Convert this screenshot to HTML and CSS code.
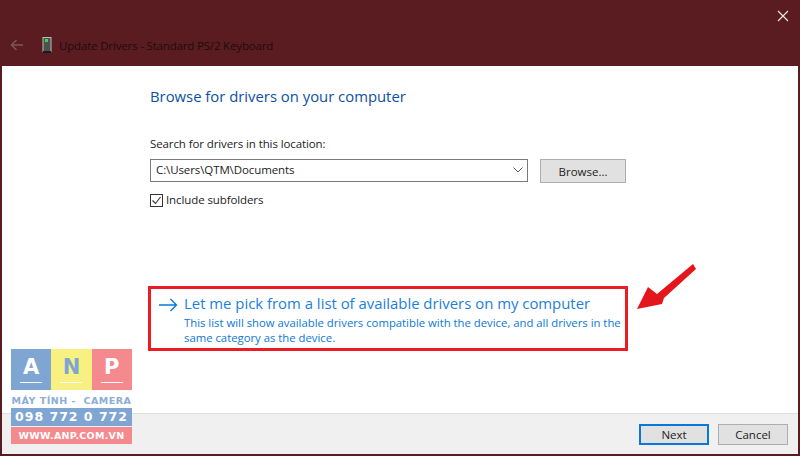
FILE: index.html
```html
<!DOCTYPE html>
<html lang="en">
<head>
<meta charset="utf-8">
<title>Update Drivers</title>
<link rel="stylesheet" href="styles.css">
</head>
<body>
<div class="window">
  <header class="titlebar">
    <div class="close-row">
      <svg class="close" width="12" height="12" viewBox="0 0 12 12"><path d="M1 1l10 10M11 1L1 11" stroke="#f0e6e6" stroke-width="1.2" fill="none"/></svg>
    </div>
    <div class="title-row">
      <svg class="back" width="14" height="12" viewBox="0 0 14 12"><path d="M13 6H1.500M6.500 1L1.500 6l5 5" stroke="#7d5558" stroke-width="1.6" fill="none"/></svg>
      <svg class="device" width="10" height="16" viewBox="0 0 10 16"><rect x="1" y="0.500" width="8" height="14" fill="#4c524f" stroke="#b9bdb9"/><rect x="3" y="2" width="3" height="3" fill="#37d84a"/><rect x="1" y="14" width="8" height="2" fill="#1d1a1a"/></svg>
      <span class="title">Update Drivers - Standard PS/2 Keyboard</span>
    </div>
  </header>
  <main class="content">
    <h1 class="heading">Browse for drivers on your computer</h1>
    <label class="field-label">Search for drivers in this location:</label>
    <div class="path-row">
      <div class="combo">
        <span class="combo-text">C:\Users\QTM\Documents</span>
        <svg width="10" height="6" viewBox="0 0 10 6"><path d="M0.500 0.500L5 5l4.500-4.500" stroke="#555" stroke-width="1" fill="none"/></svg>
      </div>
      <div class="btn browse">Browse...</div>
    </div>
    <div class="check-row">
      <svg class="check" width="13" height="13" viewBox="0 0 13 13"><rect x="0.500" y="0.500" width="12" height="12" fill="#fff" stroke="#333"/><path d="M2.500 6.500l3 3 5-6.500" stroke="#333" stroke-width="1.1" fill="none"/></svg>
      <span>Include subfolders</span>
    </div>
    <div class="pick">
      <svg class="pick-arrow" width="19" height="14" viewBox="0 0 19 14"><path d="M0 7h17.500M11.500 1l6 6-6 6" stroke="#0a78d7" stroke-width="1.4" fill="none"/></svg>
      <div class="pick-text">
        <div class="pick-title">Let me pick from a list of available drivers on my computer</div>
        <div class="pick-desc">This list will show available drivers compatible with the device, and all drivers in the same category as the device.</div>
      </div>
    </div>
  </main>
  <footer class="footer">
    <div class="btn next">Next</div>
    <div class="btn cancel">Cancel</div>
  </footer>
  <svg class="red-arrow" width="64" height="50" viewBox="0 0 64 50"><path d="M2 47L13 25 22 32 58 2 61 7 29 36 27 42Z" fill="#e4161c"/></svg>
  <div class="logo">
    <div class="logo-tiles">
      <div class="tile tile-a">A</div>
      <div class="tile tile-n">N</div>
      <div class="tile tile-p">P</div>
    </div>
    <div class="logo-line">MÁY TÍNH -&nbsp; CAMERA</div>
    <div class="logo-phone">098 772 0 772</div>
    <div class="logo-web">WWW.ANP.COM.VN</div>
  </div>
</div>
</body>
</html>
```
FILE: styles.css
```css
* { box-sizing: border-box; }
html, body { margin: 0; padding: 0; background: #fff; }
body { font-family: "Open Sans", "Noto Sans", sans-serif; }
.window {
  position: relative;
  width: 800px;
  height: 456px;
  display: flex;
  flex-direction: column;
  border: 1px solid #5a1c20;
  border-width: 1px 2px 2px 2px;
  background: #fff;
  overflow: hidden;
}
.titlebar {
  height: 65px;
  background: #5a1c20;
  display: flex;
  flex-direction: column;
  flex: none;
}
.close-row { display: flex; justify-content: flex-end; padding: 9px 9px 0 0; height: 29px; }
.title-row { display: flex; align-items: center; padding: 7px 0 0 8px; }
.device { margin-left: 18px; }
.title { margin: 1px 0 0 7px; font-size: 11.5px; color: #1c0c0d; letter-spacing: -0.17px; line-height: 15px; }
.content {
  flex: 1;
  padding: 20px 0 0 148px;
  display: flex;
  flex-direction: column;
  min-height: 0;
}
.heading { margin: 0; font-weight: 400; font-size: 14.85px; line-height: 20px; color: #0c50a6; }
.field-label { margin-top: 30px; font-size: 11.5px; line-height: 16px; color: #1c1c1c; letter-spacing: -0.1px; }
.path-row { display: flex; align-items: center; margin-top: 5px; }
.combo {
  width: 378px;
  height: 23px;
  border: 1px solid #7a7a7a;
  display: flex;
  align-items: center;
  justify-content: space-between;
  padding: 0 4px 0 5px;
  font-size: 11.5px;
  color: #1c1c1c;
  letter-spacing: -0.1px;
}
.combo-text { margin-bottom: 2px; }
.btn {
  display: flex;
  align-items: center;
  justify-content: center;
  background: #e1e1e1;
  border: 1px solid #adadad;
  font-size: 11.5px;
  color: #1c1c1c;
}
.browse { width: 86px; height: 24px; margin-left: 12px; margin-top: 2px; }
.check-row { display: flex; align-items: center; margin-top: 9px; font-size: 11.5px; color: #1c1c1c; line-height: 16px; letter-spacing: -0.1px; }
.check { margin-right: 3px; }
.pick {
  margin: 78px 0 0 -2px;
  width: 480px;
  height: 65px;
  border: 3px solid #ec1c24;
  display: flex;
  padding: 4px 0 0 8px;
}
.pick-arrow { margin-top: 5px; flex: none; }
.pick-text { margin-left: 6px; width: 445px; }
.pick-title { font-size: 14.9px; line-height: 21px; color: #1a7fdc; white-space: nowrap; margin-bottom: 1px; }
.pick-desc { font-size: 11.32px; line-height: 15px; color: #0a78d7; }
.footer {
  height: 41px;
  flex: none;
  background: #f0f0f0;
  border-top: 1px solid #dfdfdf;
  display: flex;
  align-items: center;
  justify-content: flex-end;
  gap: 9px;
  padding: 0 10px 0 0;
}
.next, .cancel { width: 70px; height: 21px; }
.next { border: 2px solid #0a78d7; }
.red-arrow { position: absolute; left: 633px; top: 261px; }
.logo {
  position: absolute;
  left: 9px;
  top: 348px;
  width: 121px;
  display: flex;
  flex-direction: column;
  font-family: "DejaVu Sans", sans-serif;
  font-weight: 700;
}
.logo-tiles { display: flex; height: 41px; }
.tile {
  flex: 1;
  display: flex;
  flex-direction: column;
  align-items: center;
  justify-content: flex-start;
  font-size: 21px;
  line-height: 24px;
  padding-top: 6px;
  color: #fff;
}
.tile::after { content: ""; display: block; width: 22px; height: 1px; background: #fff; margin-top: 3px; }
.tile-a { background: #7fa5d2; }
.tile-n { background: #f8f181; color: #7fa5d2; }
.tile-p { background: #f58a8e; }
.logo-line { height: 18px; line-height: 21px; font-size: 9.5px; color: #8aaed6; text-align: center; white-space: nowrap; letter-spacing: 0.5px; }
.logo-phone { height: 18px; line-height: 18px; background: #7fa5d2; color: #fff; font-size: 12.5px; text-align: center; letter-spacing: 1px; white-space: nowrap; }
.logo-web { margin-top: 1px; height: 17px; line-height: 17px; background: #f58a8e; color: #fff; font-size: 9.5px; text-align: center; letter-spacing: 0.3px; white-space: nowrap; }
```
